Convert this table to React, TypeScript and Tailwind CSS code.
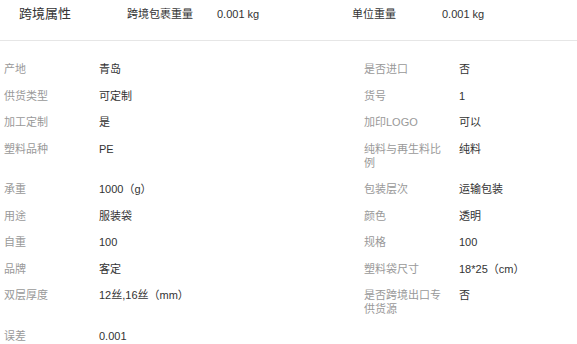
const header_fields = [
  { label: '跨境包裹重量', value: '0.001 kg' },
  { label: '单位重量', value: '0.001 kg' },
]

const attrs: [string, string][] = [
  ['产地', '青岛'],
  ['是否进口', '否'],
  ['供货类型', '可定制'],
  ['货号', '1'],
  ['加工定制', '是'],
  ['加印LOGO', '可以'],
  ['塑料品种', 'PE'],
  ['纯料与再生料比例', '纯料'],
  ['承重', '1000（g）'],
  ['包装层次', '运输包装'],
  ['用途', '服装袋'],
  ['颜色', '透明'],
  ['自重', '100'],
  ['规格', '100'],
  ['品牌', '客定'],
  ['塑料袋尺寸', '18*25（cm）'],
  ['双层厚度', '12丝,16丝（mm）'],
  ['是否跨境出口专供货源', '否'],
  ['误差', '0.001'],
]

function AttrCell({ label, value }: { label: string; value: string }) {
  return (
    <>
      <div className="py-[6.25px] pr-[10px] text-[#999]">{label}</div>
      <div className="py-[6.25px] pr-[10px] text-[#333]">{value}</div>
    </>
  )
}

export default function App() {
  return (
    <div
      className="h-[344px] w-[577px] overflow-hidden bg-white text-[11px] leading-[14px]"
      style={{ fontFamily: '"Liberation Sans", Arial, "Noto Sans CJK SC", sans-serif' }}
    >
      {/* cross-border summary */}
      <div className="flex h-[41px] items-start border-b border-[#e6e6e6] pl-[19px] pt-[7px]">
        <div className="w-[108px] text-[13px] leading-[14px] text-[#333]">跨境属性</div>
        {header_fields.map((f) => (
          <div key={f.label} className="flex">
            <div className="w-[90px] text-[#333]">{f.label}</div>
            <div className="w-[135px] text-[#333]">{f.value}</div>
          </div>
        ))}
      </div>

      {/* attribute grid */}
      <div className="mt-[14.75px] grid grid-cols-[95px_265px_95px_1fr] pl-[4px]">
        {attrs.map(([label, value]) => (
          <AttrCell key={label} label={label} value={value} />
        ))}
      </div>
    </div>
  )
}
